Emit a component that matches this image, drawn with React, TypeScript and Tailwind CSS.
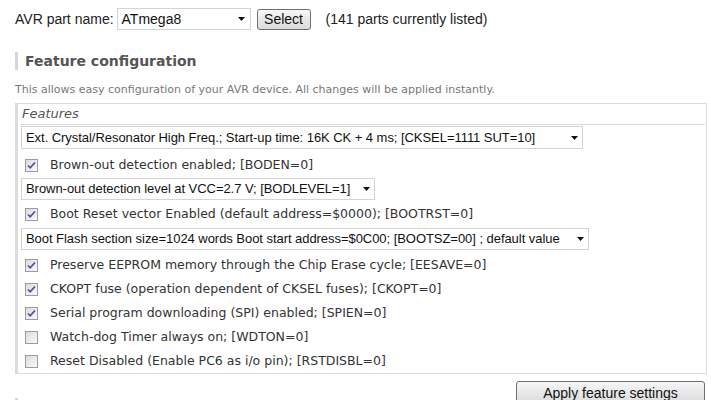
import React from "react";

const sans = "font-['Liberation_Sans',Arial,sans-serif]";
const verdana = "font-['DejaVu_Sans',Verdana,sans-serif]";

function Arrow() {
  return (
    <svg width="7" height="4" viewBox="0 0 7 4" className="shrink-0">
      <path d="M0 0h7L3.5 4z" fill="#111" />
    </svg>
  );
}

function FakeSelect({ value, width, height = 22 }: { value: string; width: number; height?: number }) {
  return (
    <div
      className={`flex items-center justify-between border border-[#d4d4d4] bg-white pl-[4px] pr-[4px] text-[13px] text-[#111] ${sans}`}
      style={{ width, height }}
    >
      <span className="whitespace-nowrap tracking-[-0.05px]">{value}</span>
      <Arrow />
    </div>
  );
}

function Checkbox({ checked }: { checked: boolean }) {
  return (
    <span className="flex h-[13px] w-[13px] shrink-0 items-center justify-center border border-[#9c9c9c] bg-gradient-to-br from-[#dcdcdc] to-[#fafafa]">
      {checked && (
        <svg width="9" height="9" viewBox="0 0 9 9">
          <path d="M1 4.5l2.2 2.3L8 1.5" stroke="#4556a8" strokeWidth="1.8" fill="none" />
        </svg>
      )}
    </span>
  );
}

function CheckRow({ label, checked, className = "" }: { label: string; checked: boolean; className?: string }) {
  return (
    <div className={`flex h-[24px] items-center pl-[4px] ${className}`}>
      <Checkbox checked={checked} />
      <span className={`ml-[12px] whitespace-nowrap text-[12.5px] text-[#333] ${verdana}`}>{label}</span>
    </div>
  );
}

function SectionHeading({ title, className = "" }: { title: string; className?: string }) {
  return (
    <div className={`flex h-[18px] items-center border-l-[3px] border-[#d6d6d6] pl-[7px] ${className}`}>
      <h2 className={`text-[14px] font-bold leading-none text-[#555] ${verdana}`}>{title}</h2>
    </div>
  );
}

export default function App() {
  return (
    <div className="h-[400px] w-[711px] overflow-hidden bg-white pl-[15px]">
      <div className={`flex items-center pt-[8px] text-[14px] text-[#222] ${sans}`}>
        <span className="mr-[3px]">AVR part name:</span>
        <div className="flex h-[22px] w-[134px] items-center justify-between border border-[#d4d4d4] bg-white pl-[4px] pr-[5px] text-[14px] text-[#111]">
          <span>ATmega8</span>
          <Arrow />
        </div>
        <button className="ml-[6px] h-[21px] w-[54px] rounded-[3px] border border-[#707070] bg-gradient-to-b from-[#f6f6f6] to-[#dadada] text-[14px] leading-none text-[#111]">
          Select
        </button>
        <span className="ml-[15px]">(141 parts currently listed)</span>
      </div>

      <SectionHeading title="Feature configuration" className="mt-[22px]" />

      <p className={`mt-[14px] text-[11px] leading-none text-[#777] ${verdana}`}>
        This allows easy configuration of your AVR device. All changes will be applied instantly.
      </p>

      <div className="mt-[8px] w-[692px] border border-l-[3px] border-[#dcdcdc] pl-[3px]">
        <div className={`mr-[1px] flex h-[21px] items-center border-b border-[#dcdcdc] pl-[1px] text-[13px] italic text-[#555] ${verdana}`}>
          Features
        </div>
        <div className="mt-[1px]">
          <FakeSelect
            width={562}
            height={23}
            value="Ext. Crystal/Resonator High Freq.; Start-up time: 16K CK + 4 ms; [CKSEL=1111 SUT=10]"
          />
        </div>
        <CheckRow className="mt-[4px]" checked label="Brown-out detection enabled; [BODEN=0]" />
        <div className="mt-[1px]">
          <FakeSelect width={354} value="Brown-out detection level at VCC=2.7 V; [BODLEVEL=1]" />
        </div>
        <CheckRow className="mt-[2px]" checked label="Boot Reset vector Enabled (default address=$0000); [BOOTRST=0]" />
        <div className="mt-[2px]">
          <FakeSelect
            width={568}
            value="Boot Flash section size=1024 words Boot start address=$0C00; [BOOTSZ=00] ; default value"
          />
        </div>
        <CheckRow className="mt-[3px]" checked label="Preserve EEPROM memory through the Chip Erase cycle; [EESAVE=0]" />
        <CheckRow checked label="CKOPT fuse (operation dependent of CKSEL fuses); [CKOPT=0]" />
        <CheckRow checked label="Serial program downloading (SPI) enabled; [SPIEN=0]" />
        <CheckRow checked={false} label="Watch-dog Timer always on; [WDTON=0]" />
        <CheckRow checked={false} label="Reset Disabled (Enable PC6 as i/o pin); [RSTDISBL=0]" />
      </div>

      <div className="flex w-[692px] justify-end pr-[2px]">
        <button
          className={`mt-[7px] h-[24px] w-[189px] rounded-[3px] border border-[#707070] bg-gradient-to-b from-[#f6f6f6] to-[#dadada] text-[14px] text-[#111] ${sans}`}
        >
          Apply feature settings
        </button>
      </div>

      <SectionHeading title="Manual fuse bits configuration" className="-mt-[7px]" />
    </div>
  );
}
